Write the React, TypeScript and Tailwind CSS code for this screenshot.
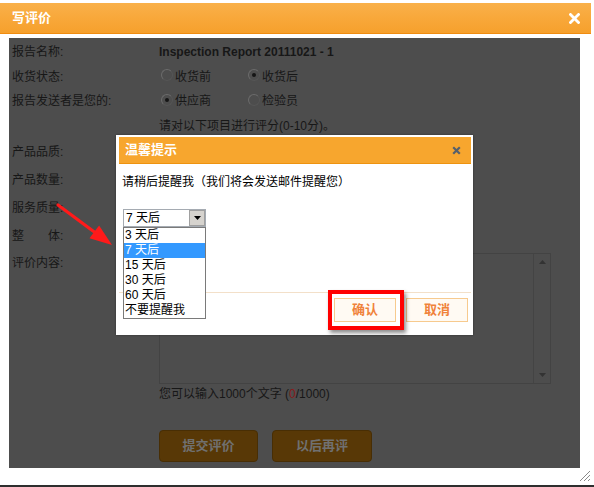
import React from "react";

function Radio({ checked }: { checked?: boolean }) {
  return (
    <span className="relative inline-flex w-[12px] h-[12px] rounded-full border border-t-[#6b6b6b] border-l-[#6b6b6b] border-r-[#555555] border-b-[#555555] bg-[#4d4d4d] items-center justify-center mr-[2px] -mt-[3px]">
      {checked && <span className="w-[4px] h-[4px] rounded-full bg-[#151515]" />}
    </span>
  );
}

function Row({ h, label, children }: { h: string; label: string; children?: React.ReactNode }) {
  return (
    <div className={`flex items-center ${h}`}>
      <div className="w-[147px] shrink-0 whitespace-pre">{label}</div>
      <div className="flex items-center">{children}</div>
    </div>
  );
}

function DimButton({ children, w }: { children: React.ReactNode; w: string }) {
  return (
    <div className={`${w} h-[32px] rounded-[4px] bg-[rgb(88,56,6)] border border-[rgb(72,46,4)] flex items-center justify-center text-[rgb(112,112,112)] font-bold text-[13px]`}>
      {children}
    </div>
  );
}

export default function App() {
  const items = ["3 天后", "7 天后", "15 天后", "30 天后", "60 天后", "不要提醒我"];
  return (
    <div className="relative w-[594px] h-[487px] bg-white overflow-hidden text-[12px] leading-[16px] font-['Liberation_Sans','Noto_Sans_CJK_SC',sans-serif] border-b-2 border-[#2e2e2e]">
      {/* main header */}
      <div className="mt-[3px] w-[591px] h-[31px] bg-gradient-to-b from-[#f9b04a] via-[#f8a83a] to-[#f6a02c] border-b border-[#f08c10] flex items-center justify-between pl-[12px] pr-[11px]">
        <span className="text-white font-bold text-[13px]">写评价</span>
        <svg width="11" height="11" viewBox="0 0 11 11">
          <path d="M1.5 1.5 L9.5 9.5 M9.5 1.5 L1.5 9.5" stroke="#ffffff" strokeWidth="2.8" strokeLinecap="square" />
        </svg>
      </div>

      {/* dimmed content panel */}
      <div className="ml-[9px] mt-[4px] w-[571px] h-[430px] bg-[#4d4d4d] text-[#171717] pl-[3px] pt-[2px]">
        <Row h="h-[24px]" label="报告名称:">
          <span className="font-bold">Inspection Report 20111021 - 1</span>
        </Row>
        <Row h="h-[25px]" label="收货状态:">
          <div className="flex items-center w-[89px] pl-[2px]">
            <Radio />
            <span>收货前</span>
          </div>
          <div className="flex items-center">
            <Radio checked />
            <span>收货后</span>
          </div>
        </Row>
        <Row h="h-[24px]" label="报告发送者是您的:">
          <div className="flex items-center w-[89px] pl-[2px]">
            <Radio checked />
            <span>供应商</span>
          </div>
          <div className="flex items-center">
            <Radio />
            <span>检验员</span>
          </div>
        </Row>
        <Row h="h-[25px]" label="">
          <span>请对以下项目进行评分(0-10分)。</span>
        </Row>
        <Row h="h-[28px]" label="产品品质:" />
        <Row h="h-[28px]" label="产品数量:" />
        <Row h="h-[28px]" label="服务质量:" />
        <Row h="h-[28px]" label="整　　体:" />
        <div className="flex items-start">
          <div className="w-[147px] shrink-0 pt-[3px] leading-[20px]">评价内容:</div>
          <div>
            <div className="mt-[3px] w-[392px] h-[131px] border border-[#434343] flex justify-end">
              <div className="w-[17px] h-full border-l border-[#444444] flex flex-col items-center justify-between py-[6px]">
                <svg width="7" height="4" viewBox="0 0 7 4"><path d="M0 4 L3.5 0 L7 4 Z" fill="#333333" /></svg>
                <svg width="7" height="4" viewBox="0 0 7 4"><path d="M0 0 L3.5 4 L7 0 Z" fill="#333333" /></svg>
              </div>
            </div>
            <div className="mt-[2px] h-[16px]">
              您可以输入1000个文字 (<span className="text-[#8a1a1a]">0</span>/1000)
            </div>
            <div className="mt-[28px] flex gap-[14px]">
              <DimButton w="w-[99px]">提交评价</DimButton>
              <DimButton w="w-[100px]">以后再评</DimButton>
            </div>
          </div>
        </div>
      </div>

      {/* resize grip */}
      <svg className="absolute right-[3px] bottom-[3px]" width="13" height="13" viewBox="0 0 13 13">
        <path d="M12 2 L2 12 M12 6 L6 12 M12 10 L10 12" stroke="#8a8a8a" strokeWidth="1" />
      </svg>

      {/* modal */}
      <div className="absolute left-[116px] top-[135px] w-[357px] h-[200px] bg-white pt-[2px] pl-[3px] pr-[2px] shadow-[0_0_2px_rgba(0,0,0,0.4)]">
        <div className="h-[27px] bg-[#f7a62e] border-b border-[#ee930f] flex items-center justify-between pl-[6px] pr-[10px]">
          <span className="text-white font-bold text-[13px]">温馨提示</span>
          <svg width="9" height="9" viewBox="0 0 9 9">
            <path d="M1.2 1.2 L7.8 7.8 M7.8 1.2 L1.2 7.8" stroke="#56606c" strokeWidth="2.2" />
          </svg>
        </div>
        <div className="mt-[10px] pl-[3px] h-[16px] text-black whitespace-nowrap">
          请稍后提醒我（我们将会发送邮件提醒您）
        </div>
        <div className="relative mt-[19px] ml-[4px] w-[83px] h-[18px] border border-[#a5abb2] bg-white flex items-center">
          <span className="pl-[2px] text-black flex-1">7 天后</span>
          <div className="w-[16px] h-[16px] bg-[#d6d3ce] border border-[#a0a0a0] flex items-center justify-center">
            <svg width="7" height="4" viewBox="0 0 7 4"><path d="M0 0 L7 0 L3.5 4 Z" fill="#000000" /></svg>
          </div>
          <div className="absolute left-[-1px] top-[17px] w-[83px] border border-[#7a7a7a] bg-white z-10">
            {items.map((it) => (
              <div
                key={it}
                className={`h-[15px] leading-[15px] pl-[1px] ${it === "7 天后" ? "bg-[#3399ff] text-white" : "text-black"}`}
              >
                {it}
              </div>
            ))}
          </div>
        </div>
        <div className="mt-[65px] h-px bg-[#f3e0c9]" />
        <div className="mt-[5px] flex justify-end gap-[10px] pr-[3px]">
          <div className="w-[62px] h-[24px] bg-[#fffaf3] border border-[#f7ca8e] flex items-center justify-center text-[#f0823a] font-bold text-[13px]">
            确认
          </div>
          <div className="w-[62px] h-[24px] bg-[#fffaf3] border border-[#f7ca8e] flex items-center justify-center text-[#f0823a] font-bold text-[13px]">
            取消
          </div>
        </div>
      </div>

      {/* red annotation box */}
      <div className="absolute left-[328px] top-[290px] w-[76px] h-[40px] border-4 border-[#ff0000] shadow-[2px_3px_4px_rgba(0,0,0,0.45)]" />

      {/* red arrow annotation */}
      <svg className="absolute left-[50px] top-[195px]" width="70" height="60" viewBox="0 0 70 60">
        <line x1="8" y1="10" x2="45" y2="37.5" stroke="#ff1a1a" strokeWidth="3.2" strokeLinecap="round" />
        <path d="M62 50 L39.5 43.3 L49.1 30.5 Z" fill="#ff1a1a" />
      </svg>
    </div>
  );
}
